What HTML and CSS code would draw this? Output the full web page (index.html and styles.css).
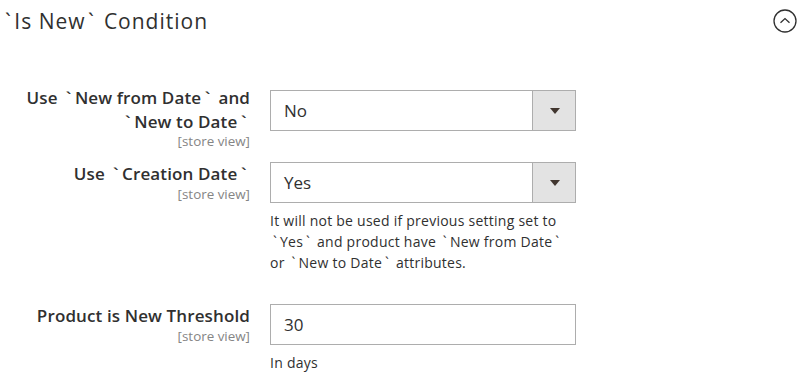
FILE: index.html
```html
<!DOCTYPE html>
<html lang="en">

<head>
    <meta charset="UTF-8">
    <meta name="viewport" content="width=device-width, initial-scale=1.0">
    <title>Is New Condition</title>
    <link rel="stylesheet" href="styles.css">
</head>

<body>
    <div class="section">
        <div class="section-head">
            <h2 class="section-title"><span class="tick">`</span>Is New<span class="tick">`</span> Condition</h2>
            <span class="collapse-btn">
                <svg width="24" height="24" viewBox="0 0 24 24">
                    <circle cx="12" cy="12" r="11" fill="none" stroke="#303030" stroke-width="1.3" />
                    <path d="M7.5 13.8 L12 9.6 L16.5 13.8" fill="none" stroke="#303030" stroke-width="1.3" />
                </svg>
            </span>
        </div>

        <div class="fields">
            <div class="field first">
                <div class="label">
                    <span class="name">Use <span class="tick">`</span>New from Date<span class="tick">`</span> and <span class="tick">`</span>New to Date<span class="tick">`</span></span>
                    <span class="scope">[store view]</span>
                </div>
                <div class="control">
                    <div class="select">
                        <span class="value">No</span>
                        <span class="arrow"></span>
                    </div>
                </div>
            </div>

            <div class="field second">
                <div class="label">
                    <span class="name">Use <span class="tick">`</span>Creation Date<span class="tick">`</span></span>
                    <span class="scope">[store view]</span>
                </div>
                <div class="control">
                    <div class="select">
                        <span class="value">Yes</span>
                        <span class="arrow"></span>
                    </div>
                    <div class="note">It will not be used if previous setting set to <span class="tick">`</span>Yes<span class="tick">`</span> and product have <span class="tick">`</span>New from Date<span class="tick">`</span> or <span class="tick">`</span>New to Date<span class="tick">`</span> attributes.</div>
                </div>
            </div>

            <div class="field third">
                <div class="label">
                    <span class="name">Product is New Threshold</span>
                    <span class="scope">[store view]</span>
                </div>
                <div class="control">
                    <div class="text-input">30</div>
                    <div class="note">In days</div>
                </div>
            </div>
        </div>
    </div>
</body>

</html>
```

FILE: styles.css
```css
* {
    box-sizing: border-box;
}

body {
    margin: 0;
    background-color: #fff;
    font-family: "Open Sans", sans-serif;
    color: #303030;
}

/* backticks are drawn wider in the original font */
.tick {
    padding: 0 0.21em;
}

.section-head {
    display: flex;
    justify-content: space-between;
    align-items: center;
    height: 42px;
    padding: 0 10px 0 5px;
}

.section-title {
    margin: 0;
    font-size: 21px;
    font-weight: 400;
    letter-spacing: 1px;
    color: #303030;
}

.section-title .tick {
    padding: 0 0.12em;
}

.section-title .tick:first-child {
    padding-left: 0;
}

.collapse-btn {
    display: flex;
}

.fields {
    padding-top: 48px;
}

.field {
    display: grid;
    grid-template-columns: 250px 306px;
    column-gap: 20px;
}

.second {
    margin-top: 12px;
}

.third {
    margin-top: 31px;
}

.label {
    display: flex;
    flex-direction: column;
    align-items: flex-end;
    text-align: right;
}

.name {
    font-size: 17px;
    font-weight: 600;
    line-height: 23.5px;
    letter-spacing: 0.12px;
}

.scope {
    font-size: 13.4px;
    line-height: 17px;
    color: #858585;
}

.first .label {
    margin-top: -4px;
}

.select {
    display: flex;
    height: 41px;
    border: 1px solid #adadad;
}

.select .value {
    flex: 1;
    padding-left: 13px;
    font-size: 17px;
    line-height: 39px;
}

.arrow {
    width: 43px;
    border-left: 1px solid #adadad;
    background-color: #e3e3e3;
    position: relative;
}

.arrow::after {
    content: "";
    position: absolute;
    left: 17px;
    top: 17px;
    border-left: 5px solid transparent;
    border-right: 5px solid transparent;
    border-top: 6px solid #41362f;
}

.text-input {
    height: 41px;
    border: 1px solid #adadad;
    padding-left: 13px;
    font-size: 17px;
    line-height: 39px;
}

.note {
    margin-top: 7px;
    font-size: 14px;
    line-height: 21px;
    letter-spacing: 0.25px;
}
```
